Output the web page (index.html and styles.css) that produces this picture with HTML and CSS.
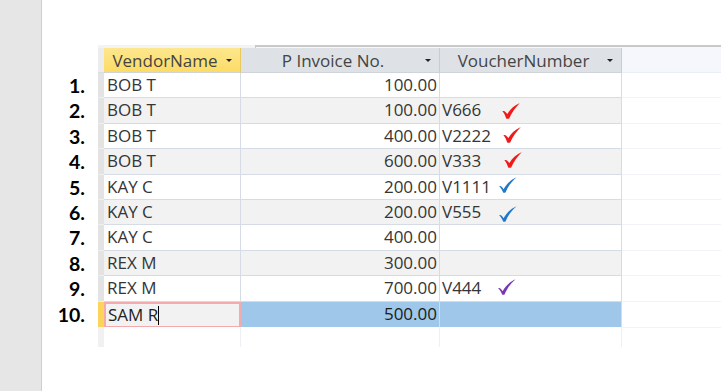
FILE: index.html
```html
<!DOCTYPE html>
<html>
<head>
<meta charset="utf-8">
<link rel="stylesheet" href="styles.css">
</head>
<body>
<div class="page">
  <div class="side"></div>
  <div class="main">
    <div class="topband">
      <div class="topband-light"></div>
      <div class="topband-edge"></div>
    </div>
    <div class="grid">
      <div class="row head">
        <div class="num"></div>
        <div class="sel hsel"></div>
        <div class="hcell active"><span class="hl">VendorName</span><span class="arrow"></span></div>
        <div class="hcell"><span class="hl">P Invoice No.</span><span class="arrow"></span></div>
        <div class="hcell"><span class="hl">VoucherNumber</span><span class="arrow"></span></div>
        <div class="hfill"></div>
      </div>

      <div class="row">
        <div class="num">1.</div><div class="sel"></div>
        <div class="c name">BOB T</div><div class="c amt">100.00</div><div class="c vch"></div><div class="fill"></div>
      </div>
      <div class="row alt">
        <div class="num">2.</div><div class="sel"></div>
        <div class="c name">BOB T</div><div class="c amt">100.00</div>
        <div class="c vch">V666<svg class="chk red r2" viewBox="0 0 18 16"><path d="M0.4 8.2 C2.2 7.2 3.8 8.8 5.4 11 C8 6.5 12 2.5 17.8 0 C13.6 4.4 10 9.4 7.2 15.4 C6.2 16 5 16 4.2 15.4 C3.3 12.6 2.2 10.2 0.4 8.2 Z"/></svg></div>
        <div class="fill"></div>
      </div>
      <div class="row">
        <div class="num">3.</div><div class="sel"></div>
        <div class="c name">BOB T</div><div class="c amt">400.00</div>
        <div class="c vch">V2222<svg class="chk red r3" viewBox="0 0 18 16"><path d="M0.4 8.2 C2.2 7.2 3.8 8.8 5.4 11 C8 6.5 12 2.5 17.8 0 C13.6 4.4 10 9.4 7.2 15.4 C6.2 16 5 16 4.2 15.4 C3.3 12.6 2.2 10.2 0.4 8.2 Z"/></svg></div>
        <div class="fill"></div>
      </div>
      <div class="row alt">
        <div class="num">4.</div><div class="sel"></div>
        <div class="c name">BOB T</div><div class="c amt">600.00</div>
        <div class="c vch">V333<svg class="chk red r4" viewBox="0 0 18 16"><path d="M0.4 8.2 C2.2 7.2 3.8 8.8 5.4 11 C8 6.5 12 2.5 17.8 0 C13.6 4.4 10 9.4 7.2 15.4 C6.2 16 5 16 4.2 15.4 C3.3 12.6 2.2 10.2 0.4 8.2 Z"/></svg></div>
        <div class="fill"></div>
      </div>
      <div class="row">
        <div class="num">5.</div><div class="sel"></div>
        <div class="c name">KAY C</div><div class="c amt">200.00</div>
        <div class="c vch">V1111<svg class="chk blue r5" viewBox="0 0 18 16"><path d="M0.2 9.2 C1.8 8.4 3.3 10 4.6 12.2 C7.6 7 11.6 2.6 17.6 0.2 C12.9 4 9.4 9 6.5 15.4 C5.7 15.9 4.8 15.9 4.1 15.4 C3.1 12.8 1.8 10.8 0.2 9.2 Z"/></svg></div>
        <div class="fill"></div>
      </div>
      <div class="row alt">
        <div class="num">6.</div><div class="sel"></div>
        <div class="c name">KAY C</div><div class="c amt">200.00</div>
        <div class="c vch">V555<svg class="chk blue r6" viewBox="0 0 18 16"><path d="M0.2 9.2 C1.8 8.4 3.3 10 4.6 12.2 C7.6 7 11.6 2.6 17.6 0.2 C12.9 4 9.4 9 6.5 15.4 C5.7 15.9 4.8 15.9 4.1 15.4 C3.1 12.8 1.8 10.8 0.2 9.2 Z"/></svg></div>
        <div class="fill"></div>
      </div>
      <div class="row">
        <div class="num">7.</div><div class="sel"></div>
        <div class="c name">KAY C</div><div class="c amt">400.00</div><div class="c vch"></div><div class="fill"></div>
      </div>
      <div class="row alt">
        <div class="num">8.</div><div class="sel"></div>
        <div class="c name">REX M</div><div class="c amt">300.00</div><div class="c vch"></div><div class="fill"></div>
      </div>
      <div class="row">
        <div class="num">9.</div><div class="sel"></div>
        <div class="c name">REX M</div><div class="c amt">700.00</div>
        <div class="c vch">V444<svg class="chk purple r9" viewBox="0 0 18 16"><path d="M0.2 9.2 C1.8 8.4 3.3 10 4.6 12.2 C7.6 7 11.6 2.6 17.6 0.2 C12.9 4 9.4 9 6.5 15.4 C5.7 15.9 4.8 15.9 4.1 15.4 C3.1 12.8 1.8 10.8 0.2 9.2 Z"/></svg></div>
        <div class="fill"></div>
      </div>
      <div class="row cur">
        <div class="num">10.</div><div class="sel cursel"></div>
        <div class="c name edit">SAM R<span class="caret"></span></div><div class="c amt selc">500.00</div><div class="c vch selc"></div><div class="fill"></div>
      </div>
      <div class="row newrow">
        <div class="num"></div><div class="sel newsel"></div>
        <div class="c"></div><div class="c"></div><div class="c"></div><div class="fill nofill"></div>
      </div>
    </div>
  </div>
</div>
</body>
</html>
```

FILE: styles.css
```css
* { box-sizing: border-box; }
html, body { margin: 0; padding: 0; background: #ffffff; }
body {
  width: 721px;
  height: 391px;
  overflow: hidden;
  font-family: "Open Sans", "Noto Sans", sans-serif;
}
.page {
  display: flex;
  height: 391px;
}
.side {
  width: 42px;
  flex: none;
  background: #e6e6e6;
  border-right: 1px solid #cfcfcf;
}
.main {
  flex: 1;
  padding-top: 45px;
  display: flex;
  flex-direction: column;
}
.topband {
  height: 3px;
  display: flex;
  margin-left: 56px;
}
.topband-light {
  width: 157px;
  background: #f3f3f3;
}
.topband-edge {
  flex: 1;
  border-top: 2px solid #c9c9c9;
  border-left: 1px solid #c9c9c9;
  background: #f7f7f7;
}
.grid {
  display: flex;
  flex-direction: column;
}
.row {
  display: grid;
  grid-template-columns: 56px 6px 137px 199px 182px 1fr;
  height: 25.4px;
}
.head { height: 25px; }
.num {
  font-family: "Lato", "Liberation Sans", sans-serif;
  font-weight: 700;
  font-size: 19.5px;
  color: #000;
  text-align: right;
  padding-right: 13px;
  line-height: 25px;
}
.sel {
  background: #e3e3e3;
  border-bottom: 1px solid #efefef;
}
.hsel { background: #ececec; border-bottom: 1px solid #d9dde3; }
.hcell {
  display: flex;
  align-items: center;
  background: #dee2e7;
  border-right: 1px solid #c9cdd3;
  border-bottom: 1px solid #cfd4db;
  color: #444;
  font-size: 17px;
  padding-right: 14px;
}
.hcell.active {
  background: linear-gradient(#fde78e, #fcdc66);
  border-right-color: #e6c95c;
}
.hl {
  flex: 1;
  text-align: center;
}
.arrow {
  width: 0; height: 0;
  border-left: 3px solid transparent;
  border-right: 3px solid transparent;
  border-top: 3px solid #222;
  margin-right: -6px;
}
.hfill {
  background: #f5f7fd;
  border-bottom: 1px solid #ebeef5;
}
.c {
  background: #fff;
  border-right: 1px solid #d6dce6;
  border-bottom: 1px solid #d6dce6;
  color: #353535;
  font-size: 17px;
  line-height: 24px;
  white-space: nowrap;
  position: relative;
}
.alt .c { background: #f2f2f2; }
.name { padding-left: 3px; }
.amt { text-align: right; padding-right: 2px; }
.vch { padding-left: 2px; }
.fill {
  border-bottom: 1px solid #f1f3f7;
}
.chk {
  position: absolute;
  width: 18px;
  height: 16px;
}
.red { fill: #f01a1a; }
.blue { fill: #1f78c8; }
.purple { fill: #7a35b0; }
.r2 { left: 62px; top: 5px; }
.r3 { left: 63px; top: 3px; }
.r4 { left: 64px; top: 3px; }
.r5 { left: 59px; top: 2px; }
.r6 { left: 59px; top: 6px; }
.r9 { left: 58px; top: 3px; }
.cursel { background: #fcd45a; }
.cur .edit {
  background: #f2f2f2;
  border: 2px solid #f4a9ac;
  line-height: 22px;
  padding-left: 2px;
  color: #222;
}
.caret {
  display: inline-block;
  width: 1px;
  height: 19px;
  background: #000;
  vertical-align: -4px;
}
.cur .selc {
  background: #9fc7e9;
  border-bottom-color: #b9d3ea;
  color: #1a1a1a;
}
.newrow { height: 20px; }
.newsel { background: #f1f1f1; border-bottom: none; }
.newrow .c {
  border-bottom: none;
  border-right-color: #eef0f4;
}
.nofill { border-bottom: none; }
```
